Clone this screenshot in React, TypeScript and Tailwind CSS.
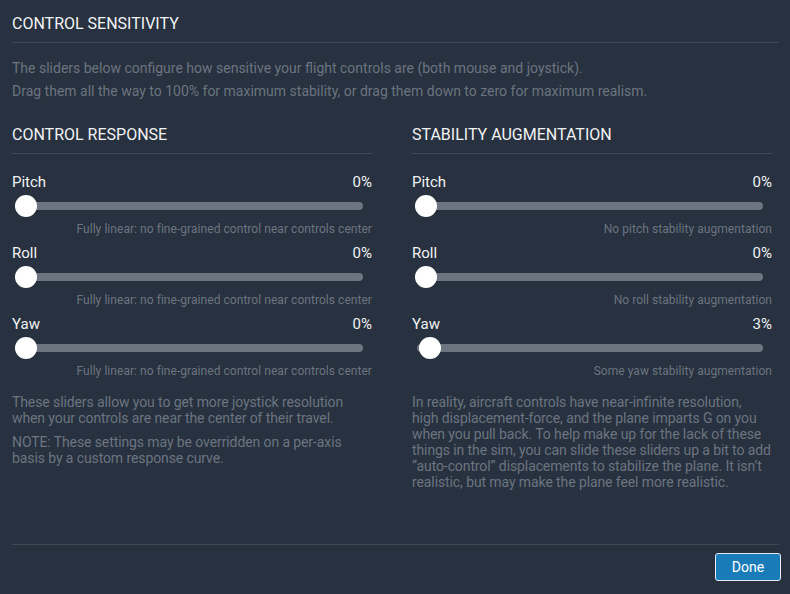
import React from "react";

type Axis = { name: string; value: number; note: string };

const response: Axis[] = [
  { name: "Pitch", value: 0, note: "Fully linear: no fine-grained control near controls center" },
  { name: "Roll", value: 0, note: "Fully linear: no fine-grained control near controls center" },
  { name: "Yaw", value: 0, note: "Fully linear: no fine-grained control near controls center" },
];

const stability: Axis[] = [
  { name: "Pitch", value: 0, note: "No pitch stability augmentation" },
  { name: "Roll", value: 0, note: "No roll stability augmentation" },
  { name: "Yaw", value: 3, note: "Some yaw stability augmentation" },
];

function SliderRow({ axis, first }: { axis: Axis; first: boolean }) {
  return (
    <div className={first ? "mt-[18px]" : "mt-[7px]"}>
      <div className="flex justify-between text-[15px] leading-5 text-[#f2f3f4]">
        <span>{axis.name}</span>
        <span>{axis.value}%</span>
      </div>
      <div className="relative mt-[3px] h-[22px]">
        <div className="absolute left-[5px] right-[9px] top-[7px] h-[8px] rounded-full bg-[#6d7580]" />
        <div
          className="absolute top-0 h-[22px] w-[22px] rounded-full bg-white"
          style={{ left: 3 + axis.value * 1.35 }}
        />
      </div>
      <div className="mt-[5px] text-right text-[12px] leading-[14px] tracking-[0.05px] text-[#6c7480]">
        {axis.note}
      </div>
    </div>
  );
}

function Column({ title, axes, children }: { title: string; axes: Axis[]; children: React.ReactNode }) {
  return (
    <div className="w-[360px]">
      <h2 className="text-[16px] leading-5 text-[#f2f3f4]">{title}</h2>
      <div className="mt-2 h-px bg-[#3f4955]" />
      {axes.map((a, i) => (
        <SliderRow key={a.name} axis={a} first={i === 0} />
      ))}
      <div className="mt-4 whitespace-nowrap text-[14px] leading-4 tracking-[-0.1px] text-[#6c7480]">{children}</div>
    </div>
  );
}

export default function App() {
  return (
    <div
      className="flex h-[594px] w-[790px] flex-col bg-[#27313f] pl-3 pr-[11px]"
      style={{ fontFamily: "Roboto, 'Noto Sans', sans-serif" }}
    >
      {/* Header */}
      <h1 className="pt-[14px] text-[16px] leading-5 text-[#f2f3f4]">CONTROL SENSITIVITY</h1>
      <div className="mt-2 h-px bg-[#3f4955]" />
      <div className="mt-[14px] whitespace-nowrap text-[14px] leading-[23px] text-[#6c7480]">
        <p>The sliders below configure how sensitive your flight controls are (both mouse and joystick).</p>
        <p>Drag them all the way to 100% for maximum stability, or drag them down to zero for maximum realism.</p>
      </div>

      {/* Columns */}
      <div className="mt-[22px] flex gap-10">
        <Column title="CONTROL RESPONSE" axes={response}>
          <p>
            These sliders allow you to get more joystick resolution
            <br />
            when your controls are near the center of their travel.
          </p>
          <p className="mt-2">
            NOTE: These settings may be overridden on a per-axis
            <br />
            basis by a custom response curve.
          </p>
        </Column>
        <Column title="STABILITY AUGMENTATION" axes={stability}>
          <p>
            In reality, aircraft controls have near-infinite resolution,
            <br />
            high displacement-force, and the plane imparts G on you
            <br />
            when you pull back. To help make up for the lack of these
            <br />
            things in the sim, you can slide these sliders up a bit to add
            <br />
            “auto-control” displacements to stabilize the plane. It isn’t
            <br />
            realistic, but may make the plane feel more realistic.
          </p>
        </Column>
      </div>

      {/* Footer */}
      <div className="mt-auto flex justify-end border-t border-[#3f4955] pb-[13px] pt-2">
        <button className="mr-[-2px] h-[28px] w-[66px] rounded-[3px] border border-[#e6eef5] bg-[#1a7bb9] text-[14px] text-white">
          Done
        </button>
      </div>
    </div>
  );
}
